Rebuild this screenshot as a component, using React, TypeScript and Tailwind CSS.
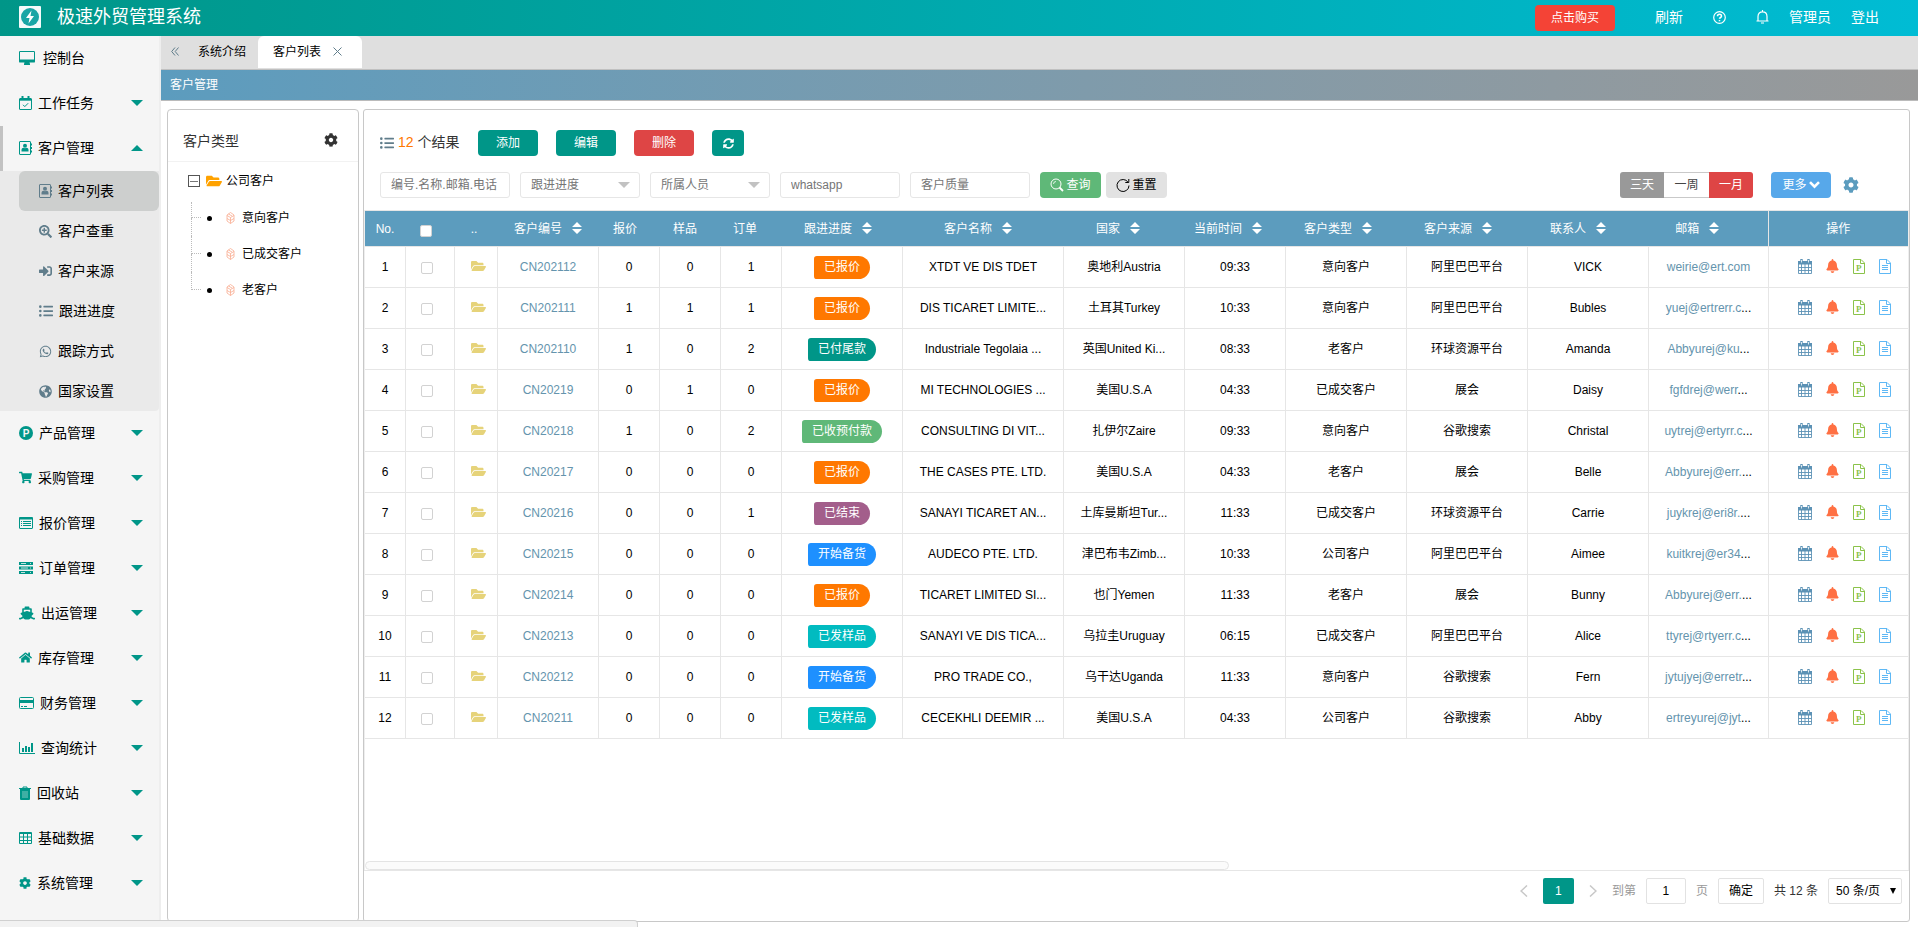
import React from 'react';
import {
  FaBell,
  FaCog,
  FaFolderOpen,
  FaGlobeAmericas,
  FaHome,
  FaListUl,
  FaSearchPlus,
  FaShip,
  FaShoppingCart,
  FaSignInAlt,
  FaSyncAlt,
  FaWhatsapp,
} from 'react-icons/fa';

type IconProps = { className?: string };

const DesktopIcon = ({ className }: IconProps) => (
  <svg className={className} width="16" height="14" viewBox="0 0 16 14" fill="currentColor" aria-hidden="true">
    <path d="M1.2 0h13.6A1.2 1.2 0 0 1 16 1.2v9.2a1.2 1.2 0 0 1-1.2 1.2h-4.3l.5 1.4v1H5v-1l.5-1.4H1.2A1.2 1.2 0 0 1 0 10.400V1.200A1.200 1.200 0 0 1 1.200 0ZM1 1v7.500h14V1Z" fillRule="evenodd" />
  </svg>
);

const AddressBookIcon = ({ className }: IconProps) => (
  <svg className={className} width="13" height="14" viewBox="0 0 13 14" aria-hidden="true">
    <rect x="0.500" y="0.500" width="11" height="13" rx="0.500" fill="none" stroke="currentColor" />
    <path d="M12.500 2.500v2M12.500 6v2M12.500 9.500v2" stroke="currentColor" />
    <circle cx="6" cy="4.800" r="2" fill="currentColor" />
    <path d="M2.500 10.500V9c0-1.500 1-2.300 2-2.300.8.600 2.200.6 3 0 1 0 2 .8 2 2.300v1.500Z" fill="currentColor" />
  </svg>
);

const CalendarCheckIcon = ({ className }: IconProps) => (
  <svg className={className} width="13" height="14" viewBox="0 0 13 14" fill="none" stroke="currentColor" aria-hidden="true">
    <rect x="0.500" y="2.500" width="12" height="11" rx="0.500" />
    <path d="M0 3.500h13M0 4.200h13" />
    <path d="M3.500 0v3.500M9.500 0v3.500" strokeWidth="2" />
    <path d="m4 8.800 1.800 1.800L9.200 7.200" />
  </svg>
);

const ListBoxIcon = ({ className }: IconProps) => (
  <svg className={className} width="14" height="12" viewBox="0 0 14 12" fill="none" stroke="currentColor" aria-hidden="true">
    <rect x="0.500" y="0.500" width="13" height="11" rx="0.500" />
    <path d="M0 1.500h14" strokeWidth="2" />
    <path d="M2 4.500h1M2 6.500h1M2 8.500h1M4 4.500h8M4 6.500h8M4 8.500h8" />
  </svg>
);

const ProductIcon = ({ className }: IconProps) => (
  <svg className={className} width="14" height="14" viewBox="0 0 14 14" aria-hidden="true">
    <circle cx="7" cy="7" r="7" fill="currentColor" />
    <text x="7" y="10.500" textAnchor="middle" fontSize="10" fontWeight="700" fill="#f5f5f5" fontFamily="Liberation Sans, sans-serif">P</text>
  </svg>
);

const ServerIcon = ({ className }: IconProps) => (
  <svg className={className} width="14" height="12" viewBox="0 0 14 12" aria-hidden="true">
    <path d="M0 0h14v3H0zM0 4.500h14v3H0zM0 9h14v3H0z" fill="currentColor" />
    <path d="M2 1.500h5M2 6h7M2 10.500h4M11 1.500h1M11 6h1M11 10.500h1" stroke="#f5f5f5" strokeWidth="0.800" />
  </svg>
);

const CardIcon = ({ className }: IconProps) => (
  <svg className={className} width="15" height="12" viewBox="0 0 15 12" aria-hidden="true">
    <rect x="0.500" y="0.500" width="14" height="11" rx="1" fill="none" stroke="currentColor" />
    <path d="M0 3h15v3H0z" fill="currentColor" />
    <path d="M2 9.500h2M5 9.500h3" stroke="currentColor" />
  </svg>
);

const ChartIcon = ({ className }: IconProps) => (
  <svg className={className} width="16" height="12" viewBox="0 0 16 12" aria-hidden="true">
    <path d="M0.500 0v11.500H16" fill="none" stroke="currentColor" />
    <path d="M3 6h2v4H3zM6 4h2v6H6zM9 5h2v5H9zM12 1h2v9h-2z" fill="currentColor" />
  </svg>
);

const TrashIcon = ({ className }: IconProps) => (
  <svg className={className} width="12" height="14" viewBox="0 0 12 14" aria-hidden="true">
    <path d="M4 2.500V1h4v1.500M0 2.500h12" fill="none" stroke="currentColor" />
    <path d="M1 3h10v10a1 1 0 0 1-1 1H2a1 1 0 0 1-1-1Z" fill="currentColor" />
    <path d="M4 5v7M6 5v7M8 5v7" stroke="#9fd5cf" strokeWidth="0.800" />
  </svg>
);

const TableIcon = ({ className }: IconProps) => (
  <svg className={className} width="13" height="12" viewBox="0 0 13 12" aria-hidden="true">
    <path d="M0.500 0.500h12v11H.500zM0 1.500h13M0.500 5h12M0.500 8.500h12M4.500 1v10.500M8.500 1v10.500" fill="none" stroke="currentColor" />
  </svg>
);

const CalendarIcon = () => (
  <svg width="14" height="15" viewBox="0 0 14 15" aria-hidden="true">
    <path d="M0 2h14v3.500H0z" fill="currentColor" />
    <path d="M0.500 2.500h13v12H.500zM0.500 8.500h13M0.500 11.500h13M3.500 5v9.500M7 5v9.500M10.500 5v9.500" fill="none" stroke="currentColor" strokeWidth="0.900" />
    <path d="M3.500 0.500v3M10.500 0.500v3" stroke="currentColor" strokeWidth="2.400" strokeLinecap="round" />
    <path d="M3.500 1v2.500M10.500 1v2.500" stroke="#fff" strokeWidth="0.800" />
  </svg>
);

const QuoteIcon = () => (
  <svg width="12" height="15" viewBox="0 0 12 15" aria-hidden="true">
    <path d="M0.500 0.500h7.500l3.500 3.500v10.500H.500zM7.500 0.500v4h4" fill="none" stroke="currentColor" />
    <text x="5.800" y="12" textAnchor="middle" fontSize="9" fontWeight="700" fill="currentColor" fontFamily="Liberation Serif, serif">P</text>
  </svg>
);

const DocIcon = () => (
  <svg width="12" height="15" viewBox="0 0 12 15" aria-hidden="true">
    <path d="M0.500 0.500h7.500l3.500 3.500v10.500H.500zM7.500 0.500v4h4M3 6.500h6M3 8.500h6M3 10.500h6" fill="none" stroke="currentColor" />
  </svg>
);

const CubeIcon = () => (
  <svg width="9" height="12" viewBox="0 0 9 12" fill="none" stroke="#f9ab8f" strokeWidth="0.800" aria-hidden="true">
    <path d="M4.500 0.500 8 3v6L4.500 11.500 1 9V3ZM1 3.500l3.500 2L8 3.500M4.500 5.500v6M2.500 2l3.500 2M1 6.500l3.500 2L8 6.500" />
  </svg>
);

const SortIcon = () => (
  <svg className="mb-0.5 ml-2.5 inline-block" width="10" height="12" viewBox="0 0 10 12" fill="#fff" aria-hidden="true">
    <path d="M5 0l5 5H0zM5 12L0 7h10z" />
  </svg>
);

const ChevronIcon = () => (
  <svg width="11" height="8" viewBox="0 0 11 8" fill="none" stroke="currentColor" strokeWidth="2.600" aria-hidden="true">
    <path d="m1 1.200 4.500 4.500L10 1.200" />
  </svg>
);

const LogoIcon = () => (
  <svg width="22" height="22" viewBox="0 0 22 22" aria-hidden="true">
    <rect width="22" height="22" rx="1" fill="#f4fafa" />
    <circle cx="11" cy="11" r="9" fill="#1aa5a5" />
    <path d="M12.500 4.500 7 12h3.500L9.500 17.500 15 10h-3.500Z" fill="#fff" />
  </svg>
);

const SearchIcon = () => (
  <svg width="14" height="14" viewBox="0 0 14 14" fill="none" stroke="currentColor" aria-hidden="true">
    <circle cx="6" cy="6" r="5" />
    <path d="M3.500 6A2.500 2.500 0 0 1 6 3.500" strokeWidth="0.800" />
    <path d="m9.500 9.500 3.500 3.500" strokeWidth="1.800" />
  </svg>
);

const ResetIcon = () => (
  <svg width="14" height="14" viewBox="0 0 14 14" fill="none" stroke="currentColor" aria-hidden="true">
    <path d="M12 4.200A6 6 0 1 0 13 7.500M12.800 1v3.500H9.300" />
  </svg>
);

const HelpIcon = () => (
  <svg width="13" height="13" viewBox="0 0 13 13" fill="none" stroke="currentColor" aria-hidden="true">
    <circle cx="6.500" cy="6.500" r="5.800" strokeWidth="1.200" />
    <path d="M4.500 5.200c0-2.600 4-2.600 4 0 0 1.300-2 1.300-2 2.600M6.500 9v1.300" strokeWidth="1.500" />
  </svg>
);

const BellIcon = () => (
  <svg width="13" height="14" viewBox="0 0 13 14" fill="none" stroke="currentColor" strokeWidth="1.200" aria-hidden="true">
    <path d="M0.500 11h12M2 11V6.500C2 3.500 4 1.800 6.500 1.800S11 3.500 11 6.500V11M6.500 0v2M5 13h3" />
  </svg>
);

const Caret = ({ up = false }: { up?: boolean }) => (
  <svg className="ml-auto" width="12" height="6" viewBox="0 0 12 6" fill="currentColor" aria-hidden="true">
    <path d={up ? 'M6 0l6 6H0z' : 'M0 0h12L6 6z'} />
  </svg>
);

type Item = { label: string; icon: React.ReactNode };

const topItems: Item[] = [
  { label: '工作任务', icon: <CalendarCheckIcon /> },
];

const subItems: Item[] = [
  { label: '客户列表', icon: <AddressBookIcon /> },
  { label: '客户查重', icon: <FaSearchPlus className="size-[13px]" /> },
  { label: '客户来源', icon: <FaSignInAlt className="h-3.5 w-[13px]" /> },
  { label: '跟进进度', icon: <FaListUl className="size-3.5" /> },
  { label: '跟踪方式', icon: <FaWhatsapp className="size-[13px]" /> },
  { label: '国家设置', icon: <FaGlobeAmericas className="size-[13px]" /> },
];

const lowerItems: Item[] = [
  { label: '产品管理', icon: <ProductIcon /> },
  { label: '采购管理', icon: <FaShoppingCart className="size-[13px]" /> },
  { label: '报价管理', icon: <ListBoxIcon /> },
  { label: '订单管理', icon: <ServerIcon /> },
  { label: '出运管理', icon: <FaShip className="h-3.5 w-4" /> },
  { label: '库存管理', icon: <FaHome className="size-[13px]" /> },
  { label: '财务管理', icon: <CardIcon /> },
  { label: '查询统计', icon: <ChartIcon /> },
  { label: '回收站', icon: <TrashIcon /> },
  { label: '基础数据', icon: <TableIcon /> },
  { label: '系统管理', icon: <FaCog className="size-3" /> },
];

const badgeColors: Record<string, string> = {
  已报价: 'bg-[#ff7800]',
  已付尾款: 'bg-[#009688]',
  已收预付款: 'bg-[#5fb878]',
  已结束: 'bg-[#a35e8b]',
  开始备货: 'bg-[#1e90ff]',
  已发样品: 'bg-[#01bbc0]',
};

type Row = [string, number, number, number, string, string, string, string, string, string, string, string];

const rows: Row[] = [
  ['CN202112', 0, 0, 1, '已报价', 'XTDT VE DIS TDET', '奥地利Austria', '09:33', '意向客户', '阿里巴巴平台', 'VICK', 'weirie@ert.com'],
  ['CN202111', 1, 1, 1, '已报价', 'DIS TICARET LIMITE...', '土耳其Turkey', '10:33', '意向客户', '阿里巴巴平台', 'Bubles', 'yuej@ertrerr.c...'],
  ['CN202110', 1, 0, 2, '已付尾款', 'Industriale Tegolaia ...', '英国United Ki...', '08:33', '老客户', '环球资源平台', 'Amanda', 'Abbyurej@ku...'],
  ['CN20219', 0, 1, 0, '已报价', 'MI TECHNOLOGIES ...', '美国U.S.A', '04:33', '已成交客户', '展会', 'Daisy', 'fgfdrej@werr...'],
  ['CN20218', 1, 0, 2, '已收预付款', 'CONSULTING DI VIT...', '扎伊尔Zaire', '09:33', '意向客户', '谷歌搜索', 'Christal', 'uytrej@ertyrr.c...'],
  ['CN20217', 0, 0, 0, '已报价', 'THE CASES PTE. LTD.', '美国U.S.A', '04:33', '老客户', '展会', 'Belle', 'Abbyurej@err....'],
  ['CN20216', 0, 0, 1, '已结束', 'SANAYI TICARET AN...', '土库曼斯坦Tur...', '11:33', '已成交客户', '环球资源平台', 'Carrie', 'juykrej@eri8r....'],
  ['CN20215', 0, 0, 0, '开始备货', 'AUDECO PTE. LTD.', '津巴布韦Zimb...', '10:33', '公司客户', '阿里巴巴平台', 'Aimee', 'kuitkrej@er34...'],
  ['CN20214', 0, 0, 0, '已报价', 'TICARET LIMITED SI...', '也门Yemen', '11:33', '老客户', '展会', 'Bunny', 'Abbyurej@err....'],
  ['CN20213', 0, 0, 0, '已发样品', 'SANAYI VE DIS TICA...', '乌拉圭Uruguay', '06:15', '已成交客户', '阿里巴巴平台', 'Alice', 'ttyrej@rtyerr.c...'],
  ['CN20212', 0, 0, 0, '开始备货', 'PRO TRADE CO.,', '乌干达Uganda', '11:33', '意向客户', '谷歌搜索', 'Fern', 'jytujyej@erretr...'],
  ['CN20211', 0, 0, 0, '已发样品', 'CECEKHLI DEEMIR ...', '美国U.S.A', '04:33', '公司客户', '谷歌搜索', 'Abby', 'ertreyurej@jyt...'],
];

const headCols: [string, string, boolean][] = [
  ['..', 'w-[42px]', false],
  ['客户编号', 'w-[100px]', true],
  ['报价', 'w-[60px]', false],
  ['样品', 'w-[60px]', false],
  ['订单', 'w-[60px]', false],
  ['跟进进度', 'w-[120px]', true],
  ['客户名称', 'w-[160px]', true],
  ['国家', 'w-[120px]', true],
  ['当前时间', 'w-[100px]', true],
  ['客户类型', 'w-[120px]', true],
  ['客户来源', 'w-[120px]', true],
  ['联系人', 'w-[120px]', true],
];

const bodyWidths = [
  'w-[41px]', 'w-[49px]', 'w-[43px]', 'w-[101px]', 'w-[61px]', 'w-[61px]', 'w-[61px]', 'w-[121px]',
  'w-[161px]', 'w-[121px]', 'w-[101px]', 'w-[121px]', 'w-[121px]', 'w-[121px]',
];

const Td = ({ children, className = '' }: { children: React.ReactNode; className?: string }) => (
  <td className={`h-[41px] whitespace-nowrap border-b border-r border-[#e6e6e6] p-0 text-center align-middle ${className}`}>{children}</td>
);

function Sidebar() {
  return (
    <nav className="w-[161px] shrink-0 overflow-hidden border-r-2 border-[#eee] bg-[#f5f5f5] text-sm text-black">
      <a href="#console" className="flex h-[45px] items-center gap-2 pb-0.5 pl-[19px]">
        <DesktopIcon className="text-[#009688]" />
        控制台
      </a>
      {topItems.map((it) => (
        <a key={it.label} href="#task" className="flex h-[45px] items-center gap-1.5 pb-0.5 pl-[19px] pr-4 text-black">
          <span className="text-[#009688]">{it.icon}</span>
          {it.label}
          <span className="ml-auto text-[#009688]"><Caret /></span>
        </a>
      ))}
      <a href="#customer" className="flex h-[45px] items-center gap-1.5 border-l-3 border-[#c2c2c2] pb-0.5 pl-4 pr-4">
        <AddressBookIcon className="text-[#009688]" />
        客户管理
        <span className="ml-auto text-[#009688]"><Caret up /></span>
      </a>
      <ul className="rounded-br bg-[#eaeaea] pl-[19px]">
        {subItems.map((it, i) => (
          <li key={it.label}>
            <a
              href="#sub"
              className={`flex h-10 items-center gap-1.5 pl-5 ${i === 0 ? 'rounded-md bg-[#cdcfce]' : ''}`}
            >
              <span className="text-[#607d8b]">{it.icon}</span>
              {it.label}
            </a>
          </li>
        ))}
      </ul>
      {lowerItems.map((it) => (
        <a key={it.label} href="#menu" className="flex h-[45px] items-center gap-1.5 pb-0.5 pl-[19px] pr-4">
          <span className="text-[#009688]">{it.icon}</span>
          {it.label}
          <span className="ml-auto text-[#009688]"><Caret /></span>
        </a>
      ))}
    </nav>
  );
}

function TypeTree() {
  const kids = ['意向客户', '已成交客户', '老客户'];
  return (
    <section className="w-[192px] shrink-0 rounded-sm border border-[#c8c8c8] text-black">
      <div className="flex h-[52px] items-end justify-between border-b border-[#f2f2f2] pb-2.5 pl-[15px] pr-5 text-sm text-[#333]">
        <h2>客户类型</h2>
        <button aria-label="设置" className="pb-1"><FaCog className="size-3.5" /></button>
      </div>
      <div className="flex h-[38px] items-center pl-5 text-xs">
        <button aria-label="收起" className="flex size-3 items-center justify-center border border-[#555]">
          <span className="h-px w-2 bg-[#777]" />
        </button>
        <FaFolderOpen className="ml-1.5 mr-1 size-4 text-[#ffa200]" />
        公司客户
      </div>
      <ul className="pl-[23px] text-xs">
        {kids.map((k, i) => (
          <li key={k} className="flex h-9 items-stretch">
            <span className="flex w-2.5 flex-col">
              <span className={`border-b border-l border-dotted border-[#bbb] ${i === 0 ? 'mt-0.5 h-4' : 'h-[18px]'}`} />
              {i < kids.length - 1 && <span className="h-[18px] border-l border-dotted border-[#bbb]" />}
            </span>
            <span className="flex items-center">
              <span className="ml-1.5 size-[5px] rounded-full bg-black" />
              <span className="ml-3.5 mr-[7px]"><CubeIcon /></span>
              {k}
            </span>
          </li>
        ))}
      </ul>
    </section>
  );
}

const fieldClass = 'h-[26px] w-[120px] rounded-[3px] border border-[#e6e6e6] bg-white px-2.5 text-xs text-[#757575] placeholder:text-[#757575]';

const FilterSelect = ({ label }: { label: string }) => (
  <div className="relative">
    <select aria-label={label} className={`${fieldClass} appearance-none`}>
      <option>{label}</option>
    </select>
    <svg className="pointer-events-none absolute right-2.5 top-2.5" width="12" height="6" viewBox="0 0 12 6" fill="#c2c2c2" aria-hidden="true">
      <path d="M0 0h12L6 6z" />
    </svg>
  </div>
);

function Toolbar() {
  return (
    <div className="px-4 text-xs">
      <div className="flex items-center pt-5">
        <FaListUl className="size-3.5 text-[#607d8b]" />
        <p className="ml-1 w-[80px] pb-0.5 text-sm text-[#333]"><span className="text-[#ff7800]">12</span> 个结果</p>
        <div className="flex gap-[18px] text-white">
          <button className="h-[26px] w-[60px] rounded bg-[#009688]">添加</button>
          <button className="h-[26px] w-[60px] rounded bg-[#009688]">编辑</button>
          <button className="h-[26px] w-[60px] rounded bg-[#de4545]">删除</button>
          <button aria-label="刷新列表" className="flex h-[26px] w-8 items-center justify-center rounded bg-[#009688]">
            <FaSyncAlt className="size-[11px]" />
          </button>
        </div>
      </div>
      <div className="flex items-center gap-2.5 pb-3 pt-4">
        <input aria-label="编号.名称.邮箱.电话" placeholder="编号.名称.邮箱.电话" className="h-[26px] w-[130px] rounded-[3px] border border-[#e6e6e6] px-2.5 text-xs placeholder:text-[#757575]" />
        <FilterSelect label="跟进进度" />
        <FilterSelect label="所属人员" />
        <input aria-label="whatsapp" placeholder="whatsapp" className={fieldClass} />
        <input aria-label="客户质量" placeholder="客户质量" className={fieldClass} />
        <div className="flex gap-[5px]">
          <button className="flex h-[26px] w-[61px] items-center justify-center gap-0.5 rounded bg-[#5fb878] text-white"><SearchIcon />查询</button>
          <button className="flex h-[26px] w-[61px] items-center justify-center gap-0.5 rounded bg-[#e2e2e2] text-black"><ResetIcon />重置</button>
        </div>
        <div className="ml-auto flex items-center pr-[34px]">
          <div className="flex overflow-hidden rounded-[3px]">
            <button className="h-[26px] w-11 bg-[#999] text-white">三天</button>
            <button className="h-[26px] w-[45px] border-y border-[#c9c9c9] bg-white text-[#444]">一周</button>
            <button className="h-[26px] w-11 bg-[#de4545] text-white">一月</button>
          </div>
          <button className="ml-[18px] flex h-[26px] w-[60px] items-center justify-center gap-0.5 rounded bg-[#57a8ea] text-white">
            更多<ChevronIcon />
          </button>
          <button aria-label="表格设置" className="ml-3 text-[#5c9cbe]"><FaCog className="size-4" /></button>
        </div>
      </div>
    </div>
  );
}

function CustomerTable() {
  return (
    <div className="text-xs text-black">
      <table className="w-full table-fixed border-collapse border-y border-[#e6e6e6] bg-[#5c9cbe] text-white">
        <thead>
          <tr className="h-9">
            <th className="w-10 p-0 font-normal">No.</th>
            <th className="w-12 p-0 font-normal">
              <input type="checkbox" aria-label="全选" className="ml-[15px] mt-1 block size-3 appearance-none rounded-[2px] border border-[#d2d2d2] bg-white" />
            </th>
            {headCols.map(([label, w, sort]) => (
              <th key={label} className={`${w} whitespace-nowrap p-0 font-normal ${sort ? 'pl-1.5' : ''}`}>
                {label}
                {sort && <SortIcon />}
              </th>
            ))}
            <th className="whitespace-nowrap p-0 pl-1.5 pr-3.5 font-normal">邮箱<SortIcon /></th>
            <th className="w-[140px] border-l border-[#e6e6e6] p-0 font-normal">操作</th>
          </tr>
        </thead>
      </table>
      <table className="w-full table-fixed border-separate border-spacing-0">
        <colgroup>
          {bodyWidths.map((w, i) => <col key={i} className={w} />)}
          <col />
          <col className="w-[139px]" />
        </colgroup>
        <tbody>
          {rows.map((r, i) => {
            const [code, quote, sample, order, status, name, country, time, type, source, contact, mail] = r;
            const cut = mail.endsWith('...');
            return (
              <tr key={code}>
                <Td>{i + 1}</Td>
                <Td>
                  <input type="checkbox" aria-label={`选择 ${code}`} className="ml-[15px] mt-0.5 block size-3 appearance-none rounded-[2px] border border-[#d2d2d2] bg-white" />
                </Td>
                <Td><FaFolderOpen className="mb-0.5 ml-4 h-3.5 w-[15px] text-[#e6d37a]" /></Td>
                <Td><a href="#detail" className="text-[#6494ad]">{code}</a></Td>
                <Td>{quote}</Td>
                <Td>{sample}</Td>
                <Td>{order}</Td>
                <Td>
                  <span className={`inline-block h-[23px] rounded-l-[3px] rounded-r-xl px-2.5 align-middle leading-[23px] text-white ${badgeColors[status]}`}>{status}</span>
                </Td>
                <Td>{name}</Td>
                <Td>{country}</Td>
                <Td>{time}</Td>
                <Td>{type}</Td>
                <Td>{source}</Td>
                <Td>{contact}</Td>
                <Td>
                  <a href="#mail" className="text-[#6494ad]">{cut ? mail.slice(0, -3) : mail}</a>
                  {cut && <span>...</span>}
                </Td>
                <td className="border-b border-[#e6e6e6] p-0">
                  <div className="flex items-center justify-center gap-3.5 pb-0.5 pl-3">
                    <button aria-label="日程" className="text-[#5c92b5]"><CalendarIcon /></button>
                    <button aria-label="提醒" className="text-[#ff7043]"><FaBell className="h-3.5 w-[13px]" /></button>
                    <button aria-label="报价单" className="text-[#8bc34a]"><QuoteIcon /></button>
                    <button aria-label="文档" className="text-[#5eb8f5]"><DocIcon /></button>
                  </div>
                </td>
              </tr>
            );
          })}
        </tbody>
      </table>
    </div>
  );
}

function Pager() {
  return (
    <footer className="flex h-[51px] items-start justify-end border-t border-[#e6e6e6] pr-[7px] pt-[7px] text-xs text-[#333]">
      <div className="flex h-[26px] items-center">
        <button aria-label="上一页" className="text-[#c8c8c8]">
          <svg width="8" height="12" viewBox="0 0 8 12" fill="none" stroke="currentColor" strokeWidth="1.500"><path d="M7 .500 1 6l6 5.500" /></svg>
        </button>
        <button className="ml-[15px] h-[26px] w-[31px] rounded-[2px] bg-[#009688] text-white">1</button>
        <button aria-label="下一页" className="ml-[15px] text-[#c8c8c8]">
          <svg width="8" height="12" viewBox="0 0 8 12" fill="none" stroke="currentColor" strokeWidth="1.500"><path d="M1 .500 7 6l-6 5.500" /></svg>
        </button>
        <label className="ml-[15px] flex items-center gap-2.5 text-[#999]">
          到第
          <input defaultValue="1" className="h-[26px] w-10 rounded-[2px] border border-[#e2e2e2] text-center text-black" />
          页
        </label>
        <button className="ml-2.5 h-[26px] w-[46px] rounded-[2px] border border-[#e2e2e2] text-black">确定</button>
        <span className="mx-2.5">共 12 条</span>
        <div className="relative">
          <select aria-label="每页条数" className="h-[26px] w-[74px] appearance-none rounded-[2px] border border-[#e2e2e2] px-[7px] text-black">
            <option>50 条/页</option>
          </select>
          <svg className="pointer-events-none absolute right-1.5 top-2.5" width="6" height="6" viewBox="0 0 6 6" aria-hidden="true"><path d="M0 0h6L3 6z" /></svg>
        </div>
      </div>
    </footer>
  );
}

export default function App() {
  return (
    <div className="relative flex h-screen flex-col overflow-hidden bg-white font-['Liberation_Sans','Noto_Sans_CJK_SC',sans-serif]">
      <header className="flex h-9 shrink-0 items-center bg-linear-to-r from-[#009688] to-[#00bcd4] pb-0.5 pl-[19px] pr-[39px] text-sm text-white">
        <LogoIcon />
        <h1 className="ml-4 text-lg leading-6">极速外贸管理系统</h1>
        <button className="ml-auto mt-0.5 h-[26px] w-20 rounded bg-[#f44336] text-xs">点击购买</button>
        <button className="ml-10">刷新</button>
        <button aria-label="帮助" className="ml-[30px]"><HelpIcon /></button>
        <button aria-label="通知" className="ml-[30px]"><BellIcon /></button>
        <button className="ml-5">管理员</button>
        <button className="ml-5">登出</button>
      </header>
      <div className="flex min-h-0 flex-1">
        <Sidebar />
        <main className="flex min-w-0 flex-1 flex-col">
          <div className="flex h-[34px] shrink-0 items-start border-b border-[#c0c0c0] bg-[#dfdfdf] text-xs text-black">
            <button aria-label="向左" className="flex h-[31px] items-center pl-2.5 text-[#607d8b]">
              <svg width="8" height="9" viewBox="0 0 8 9" fill="none" stroke="currentColor"><path d="M4 .500.700 4.500 4 8.500M7.500.500 4.200 4.500l3.300 4" /></svg>
            </button>
            <a href="#intro" className="flex h-[31px] items-center pl-[19px] pr-3">系统介绍</a>
            <div className="flex h-8 items-center rounded-t-md bg-white pb-px pl-[15px] pr-5">
              客户列表
              <button aria-label="关闭" className="ml-3 text-[#607d8b]">
                <svg width="9" height="9" viewBox="0 0 9 9" fill="none" stroke="currentColor"><path d="m.500.500 8 8M8.500.500l-8 8" /></svg>
              </button>
            </div>
          </div>
          <div className="flex h-[31px] shrink-0 items-center border-b border-[#bbb] bg-linear-to-r from-[#5c9cbe] to-[#999] pl-[9px] text-xs text-white">客户管理</div>
          <div className="flex min-h-0 flex-1 gap-1 pb-[5px] pl-1.5 pr-2 pt-2">
            <TypeTree />
            <section className="flex min-w-0 flex-1 flex-col rounded-[3px] border border-[#c8c8c8]">
              <Toolbar />
              <div className="flex min-h-0 flex-1 flex-col overflow-hidden border-x border-[#eee]">
                <CustomerTable />
                <div className="mt-auto h-[9px] w-[56%] rounded-full border border-[#e4e4e4] bg-[#fbfbfb]" />
              </div>
              <Pager />
            </section>
          </div>
        </main>
      </div>
      <div className="absolute bottom-0 left-0 h-[7px] w-[638px] rounded-tr border-r border-t border-[#d0d0d0] bg-[#f2f2f2]" />
    </div>
  );
}
